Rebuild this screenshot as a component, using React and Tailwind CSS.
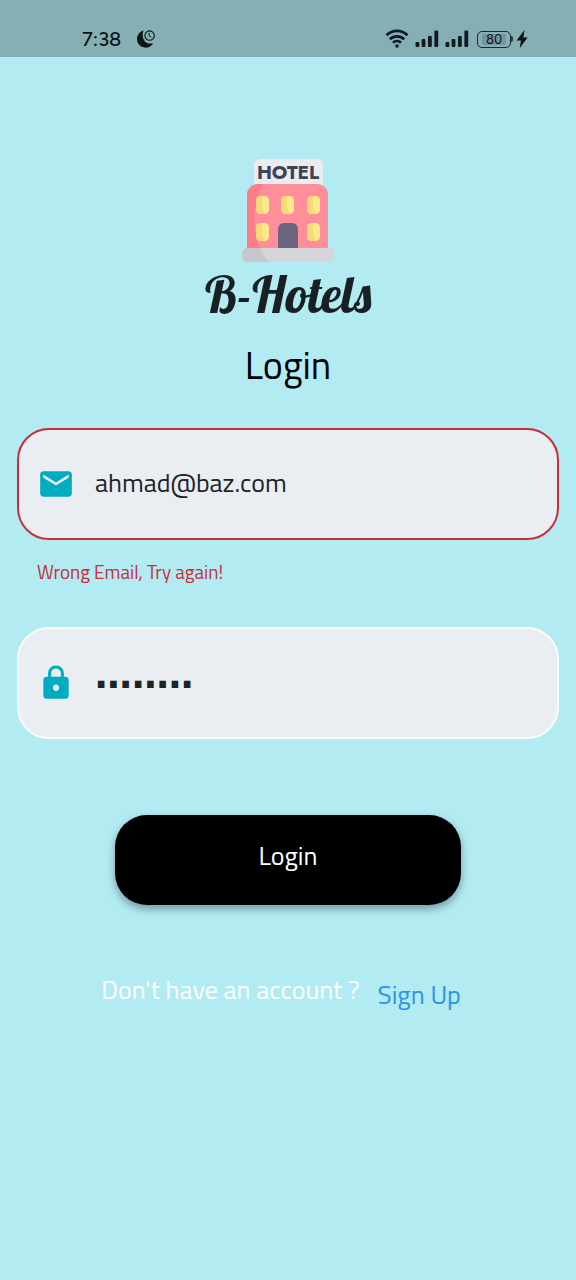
import { useState } from "react";

function SignalBars() {
  return (
    <svg viewBox="0 0 24 18" className="h-[18px] w-6" fill="#101c20" aria-hidden="true">
      <rect x="0.5" y="12" width="3.8" height="5" rx="1" />
      <rect x="6.6" y="9" width="3.8" height="8" rx="1" />
      <rect x="13" y="6" width="3.8" height="11" rx="1" />
      <rect x="19.4" y="0.5" width="3.8" height="16.500" rx="1" />
    </svg>
  );
}

function StatusBar() {
  return (
    <header className="flex h-[57px] items-end justify-between bg-[#85afb5] pr-12 pb-2 pl-[82px] text-[#0b1416]">
      <div className="flex items-center gap-[15px]">
        <span className="font-['Figtree','Inter',sans-serif] text-xl leading-5 font-medium">7:38</span>
        <svg viewBox="0 0 20 20" className="size-5" aria-hidden="true">
          <path d="M7.4 1.4C3.6 2.6 1 6 1 10a8.6 8.6 0 0 0 16.2 4C11 16.5 4.5 11 7.4 1.4z" fill="#0b1416" />
          <circle cx="13.6" cy="6.6" r="4.7" fill="none" stroke="#0b1416" strokeWidth="1.1" />
          <path d="M13.2 4v2.9l2 1.4" fill="none" stroke="#0b1416" strokeWidth="1" />
        </svg>
      </div>
      <div className="flex items-center gap-[6px]">
        <svg viewBox="0 0 24 20" className="h-5 w-6" fill="none" stroke="#101c20" strokeWidth="2.7" aria-hidden="true">
          <path d="M1.5 6.2a15 15 0 0 1 21 0" />
          <path d="M4.8 10.2a10.4 10.4 0 0 1 14.4 0" />
          <path d="M8 13.8a5.800 5.800 0 0 1 8 0" />
          <circle cx="12" cy="17" r="1.8" fill="#101c20" stroke="none" />
        </svg>
        <SignalBars />
        <SignalBars />
        <div className="flex items-center pl-[2px]">
          <div className="flex h-[17px] w-[34px] items-center justify-center rounded-[5px] border border-[#1c2a2e] bg-[#85afb5] p-[2px] font-['Inter',sans-serif] text-[13px] leading-none">
            <span className="flex h-full w-6 items-center justify-center rounded-xs bg-[#7397a0]">80</span>
          </div>
          <div className="h-[6px] w-[2px] rounded-r bg-[#2a3a3e]" />
          <svg viewBox="0 0 12 18" className="ml-[3px] h-[18px] w-3" fill="#0b1416" aria-hidden="true">
            <path d="M8.4 0 .6 10.4h4.300L3.800 18 11.600 7.400H7.400z" />
          </svg>
        </div>
      </div>
    </header>
  );
}

function HotelWindow({ x, y }) {
  return (
    <g transform={`translate(${x} ${y})`}>
      <rect width="13" height="18" rx="4.5" fill="#fbe98e" />
      <path d="M4.5 0A4.5 4.5 0 0 0 0 4.5v9A4.5 4.5 0 0 0 4.5 18H9C6 13 5 7 6 0z" fill="#f7d976" />
    </g>
  );
}

function HotelLogo() {
  return (
    <svg viewBox="0 0 92 104" className="h-[104px] w-[92px]" role="img" aria-label="Hotel">
      <rect x="12" y="0" width="69" height="34" rx="6" fill="#eaedf0" />
      <path d="M5 92V36a11 11 0 0 1 11-11h59a11 11 0 0 1 11 11v56z" fill="#ff8e9b" />
      <path d="M5 92V36a11 11 0 0 1 11-11h5C10 46 10 68 18 92z" fill="#fd7d86" />
      <text x="46" y="19.5" textAnchor="middle" fontFamily="Jost, Lato, sans-serif" fontWeight="700" fontSize="19" fill="#3f4257">
        HOTEL
      </text>
      <HotelWindow x={14} y={37} />
      <HotelWindow x={39} y={37} />
      <HotelWindow x={65} y={37} />
      <HotelWindow x={14} y={64} />
      <HotelWindow x={65} y={64} />
      <path d="M36 90V70a6 6 0 0 1 6-6h8a6 6 0 0 1 6 6v20z" fill="#6b6580" />
      <rect x="0" y="89" width="92" height="14" rx="5" fill="#d6d6da" />
      <path d="M5 89a5 5 0 0 0-5 5v4a5 5 0 0 0 5 5h22a42 42 0 0 1-9-14z" fill="#c6c7cc" />
    </svg>
  );
}

const field =
  "flex h-28 items-center gap-5 rounded-[32px] border-2 bg-[#eaedf1] px-[18px]";
const input =
  "min-w-0 flex-1 bg-transparent pb-1 text-[26px] text-[#1c2427] outline-none";

export default function App() {
  const [email, setEmail] = useState("ahmad@baz.com");
  const [password, setPassword] = useState("12345678");

  return (
    <div className="min-h-screen bg-[#b2ebf2] font-['Titillium_Web','Roboto',sans-serif]">
      <StatusBar />
      <main className="px-[17px] pt-[102px]">
        <div className="flex flex-col items-center">
          <HotelLogo />
          <p className="mt-[3px] font-['Lobster','Liberation_Serif',serif] text-[51px] leading-[56px] text-[#172023]">
            B-Hotels
          </p>
          <h1 className="mt-[17px] text-[38px] leading-[52px] text-black">Login</h1>
        </div>
        <form className="mt-[37px]" onSubmit={(event) => event.preventDefault()}>
          <div className={`${field} border-[#c62f3a]`}>
            <label htmlFor="email" aria-label="Email">
              <svg viewBox="0 0 24 24" className="size-[38px]" fill="#00acc1" aria-hidden="true">
                <path d="M20 4H4c-1.1 0-1.99.9-1.99 2L2 18c0 1.1.9 2 2 2h16c1.1 0 2-.9 2-2V6c0-1.1-.9-2-2-2zm0 4-8 5-8-5V6l8 5 8-5v2z" />
              </svg>
            </label>
            <input
              id="email"
              type="email"
              aria-invalid="true"
              aria-describedby="email-error"
              className={input}
              value={email}
              onChange={(event) => setEmail(event.target.value)}
            />
          </div>
          <p id="email-error" className="mt-[18px] pl-5 text-[19px] leading-7 text-[#c62f3a]">
            Wrong Email, Try again!
          </p>
          <div className={`${field} mt-[41px] border-[#f8fcfd]`}>
            <label htmlFor="password" aria-label="Password">
              <svg viewBox="0 0 24 24" className="size-[38px]" fill="#00acc1" aria-hidden="true">
                <path d="M18 8h-1V6c0-2.76-2.24-5-5-5S7 3.24 7 6v2H6c-1.1 0-2 .9-2 2v10c0 1.1.9 2 2 2h12c1.1 0 2-.9 2-2V10c0-1.1-.9-2-2-2zm-6 9c-1.1 0-2-.9-2-2s.9-2 2-2 2 .9 2 2-.9 2-2 2zm3.1-9H8.9V6c0-1.71 1.39-3.1 3.1-3.1 1.71 0 3.1 1.39 3.1 3.1v2z" />
              </svg>
            </label>
            <input
              id="password"
              type="password"
              className={input}
              value={password}
              onChange={(event) => setPassword(event.target.value)}
            />
          </div>
          <button
            type="submit"
            className="mx-auto mt-[76px] block h-[90px] w-[64%] rounded-[32px] bg-black pb-[10px] text-[26px] text-white shadow-[0_4px_8px_rgba(0,0,0,0.35)]"
          >
            Login
          </button>
        </form>
        <div className="mt-[67px] flex justify-center gap-[18px] pr-[14px] text-[26px] leading-9">
          <p className="text-white">Don't have an account ?</p>
          <a href="#signup" className="mt-[5px] text-[#2b95e3]">
            Sign Up
          </a>
        </div>
      </main>
    </div>
  );
}
